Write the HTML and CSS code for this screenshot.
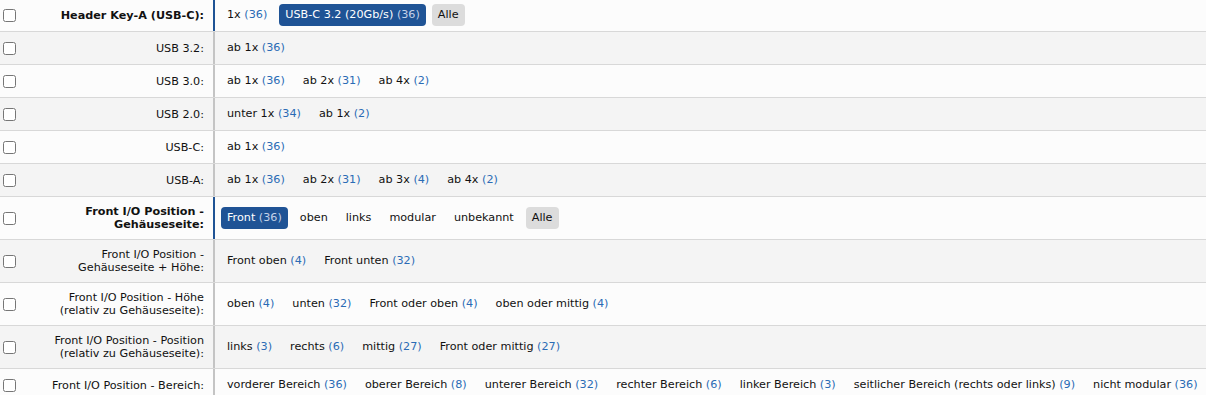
FILE: index.html
```html
<!DOCTYPE html>
<html lang="de">
<head>
    <meta charset="UTF-8">
    <title>Filter</title>
    <link rel="stylesheet" href="styles.css">
</head>
<body>

    <div class="filter-list">
        <div class="filter-row active">
            <div class="filter-check"><input type="checkbox"></div>
            <div class="filter-label bold">Header Key-A (USB-C):</div>
            <div class="filter-values">
                <a class="opt">1x <span class="cnt">(36)</span></a>
                <a class="opt sel">USB-C 3.2 (20Gb/s) <span class="cnt">(36)</span></a>
                <a class="opt all">Alle</a>
            </div>
        </div>
        <div class="filter-row">
            <div class="filter-check"><input type="checkbox"></div>
            <div class="filter-label">USB 3.2:</div>
            <div class="filter-values">
                <a class="opt">ab 1x <span class="cnt">(36)</span></a>
            </div>
        </div>
        <div class="filter-row">
            <div class="filter-check"><input type="checkbox"></div>
            <div class="filter-label">USB 3.0:</div>
            <div class="filter-values">
                <a class="opt">ab 1x <span class="cnt">(36)</span></a>
                <a class="opt">ab 2x <span class="cnt">(31)</span></a>
                <a class="opt">ab 4x <span class="cnt">(2)</span></a>
            </div>
        </div>
        <div class="filter-row">
            <div class="filter-check"><input type="checkbox"></div>
            <div class="filter-label">USB 2.0:</div>
            <div class="filter-values">
                <a class="opt">unter 1x <span class="cnt">(34)</span></a>
                <a class="opt">ab 1x <span class="cnt">(2)</span></a>
            </div>
        </div>
        <div class="filter-row">
            <div class="filter-check"><input type="checkbox"></div>
            <div class="filter-label">USB-C:</div>
            <div class="filter-values">
                <a class="opt">ab 1x <span class="cnt">(36)</span></a>
            </div>
        </div>
        <div class="filter-row">
            <div class="filter-check"><input type="checkbox"></div>
            <div class="filter-label">USB-A:</div>
            <div class="filter-values">
                <a class="opt">ab 1x <span class="cnt">(36)</span></a>
                <a class="opt">ab 2x <span class="cnt">(31)</span></a>
                <a class="opt">ab 3x <span class="cnt">(4)</span></a>
                <a class="opt">ab 4x <span class="cnt">(2)</span></a>
            </div>
        </div>
        <div class="filter-row active">
            <div class="filter-check"><input type="checkbox"></div>
            <div class="filter-label bold">Front I/O Position -<br>Gehäuseseite:</div>
            <div class="filter-values">
                <a class="opt sel">Front <span class="cnt">(36)</span></a>
                <a class="opt">oben</a>
                <a class="opt">links</a>
                <a class="opt">modular</a>
                <a class="opt">unbekannt</a>
                <a class="opt all">Alle</a>
            </div>
        </div>
        <div class="filter-row">
            <div class="filter-check"><input type="checkbox"></div>
            <div class="filter-label">Front I/O Position -<br>Gehäuseseite + Höhe:</div>
            <div class="filter-values">
                <a class="opt">Front oben <span class="cnt">(4)</span></a>
                <a class="opt">Front unten <span class="cnt">(32)</span></a>
            </div>
        </div>
        <div class="filter-row">
            <div class="filter-check"><input type="checkbox"></div>
            <div class="filter-label">Front I/O Position - Höhe<br>(relativ zu Gehäuseseite):</div>
            <div class="filter-values">
                <a class="opt">oben <span class="cnt">(4)</span></a>
                <a class="opt">unten <span class="cnt">(32)</span></a>
                <a class="opt">Front oder oben <span class="cnt">(4)</span></a>
                <a class="opt">oben oder mittig <span class="cnt">(4)</span></a>
            </div>
        </div>
        <div class="filter-row">
            <div class="filter-check"><input type="checkbox"></div>
            <div class="filter-label">Front I/O Position - Position<br>(relativ zu Gehäuseseite):</div>
            <div class="filter-values">
                <a class="opt">links <span class="cnt">(3)</span></a>
                <a class="opt">rechts <span class="cnt">(6)</span></a>
                <a class="opt">mittig <span class="cnt">(27)</span></a>
                <a class="opt">Front oder mittig <span class="cnt">(27)</span></a>
            </div>
        </div>
        <div class="filter-row">
            <div class="filter-check"><input type="checkbox"></div>
            <div class="filter-label">Front I/O Position - Bereich:</div>
            <div class="filter-values">
                <a class="opt">vorderer Bereich <span class="cnt">(36)</span></a>
                <a class="opt">oberer Bereich <span class="cnt">(8)</span></a>
                <a class="opt">unterer Bereich <span class="cnt">(32)</span></a>
                <a class="opt">rechter Bereich <span class="cnt">(6)</span></a>
                <a class="opt">linker Bereich <span class="cnt">(3)</span></a>
                <a class="opt">seitlicher Bereich (rechts oder links) <span class="cnt">(9)</span></a>
                <a class="opt">nicht modular <span class="cnt">(36)</span></a>
            </div>
        </div>
    </div>

</body>
</html>
```
FILE: styles.css
```css
* { box-sizing: border-box; margin: 0; padding: 0; }
body {
    font-family: "DejaVu Sans", Tahoma, Verdana, sans-serif;
    font-size: 11.2px;
    color: #111;
    background: #fcfcfc;
    overflow: hidden;
}
.filter-row {
    display: flex;
    align-items: stretch;
    background-color: #fcfcfc;
    border-bottom: 1px solid #d8d8d8;
}
.filter-row:nth-child(even) { background-color: #f4f4f4; }
.filter-row:first-child .filter-values { padding-top: 4px; }
.filter-check {
    width: 20px;
    flex-shrink: 0;
    display: flex;
    align-items: center;
}
.filter-check input {
    width: 13px;
    height: 13px;
    margin-left: 3px;
}
.filter-label {
    width: 193px;
    flex-shrink: 0;
    padding: 8px 9px 8px 0;
    text-align: right;
    line-height: 13px;
    display: flex;
    align-items: center;
    justify-content: flex-end;
}
.filter-label.bold { font-weight: bold; }
.filter-values {
    flex: 1;
    min-width: 0;
    display: flex;
    flex-wrap: nowrap;
    align-items: center;
    gap: 6px;
    padding: 5px 6px;
    border-left: 2px solid #c4c4c4;
}
.filter-row.active .filter-values { border-left-color: #1f5395; }
.opt {
    display: inline-block;
    height: 22px;
    line-height: 22px;
    padding: 0 6px;
    border-radius: 4px;
    white-space: nowrap;
    cursor: pointer;
}
.cnt { color: #2a6bb5; }
.opt.sel {
    background-color: #1f5395;
    color: #fff;
}
.opt.sel .cnt { color: #c4d2e8; }
.opt.all { background-color: #dcdcdc; }
```
